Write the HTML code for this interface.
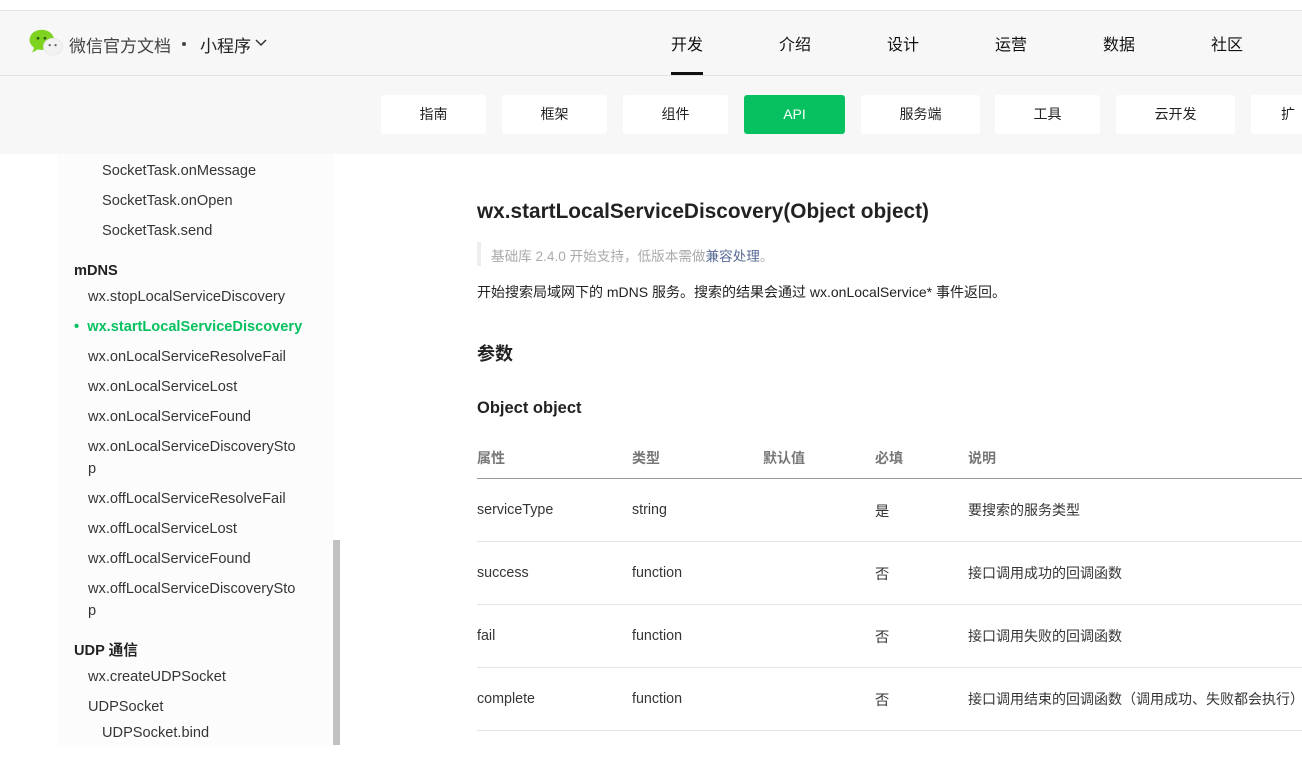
<!DOCTYPE html>
<html><head><meta charset="utf-8"><style>
*{margin:0;padding:0;box-sizing:border-box}
body{width:1302px;height:757px;overflow:hidden;background:#fff;font-family:"Liberation Sans","Noto Sans CJK SC",sans-serif;color:#333;position:relative}
.a{position:absolute;white-space:nowrap}
.hdr{position:absolute;left:0;top:10px;width:1302px;height:66px;background:#f7f7f7;border-top:1px solid #e5e5e5;border-bottom:1px solid #e5e5e5}
.sub{position:absolute;left:0;top:76px;width:1302px;height:78px;background:#f7f7f7}
.btn{position:absolute;top:95px;height:39px;background:#fff;border-radius:3px;font-size:14px;line-height:39px;text-align:center;color:#222}
.nav{position:absolute;top:31px;font-size:16px;color:#111}
.sb{font-size:14.6px;line-height:20px;color:#353535}
.th{font-size:14px;color:#777;font-weight:bold;top:448px}
.td{font-size:14.3px;color:#353535}
.ln{position:absolute;left:477px;width:825px;height:1px;background:#e5e5e5}
</style></head><body>
<div class="hdr"></div>
<svg class="a" style="left:29px;top:29px" width="34" height="28" viewBox="0 0 32 26">
<ellipse cx="12" cy="10" rx="11.5" ry="9.5" fill="#7ed321"/><path d="M5 17 L3 22 L10 18z" fill="#7ed321"/>
<circle cx="8.5" cy="8.5" r="1.3" fill="#2a5a10"/><circle cx="15" cy="8.5" r="1.3" fill="#2a5a10"/>
<ellipse cx="22.5" cy="16.5" rx="9" ry="8" fill="#f2f2f2" stroke="#ddd" stroke-width=".5"/>
<circle cx="19.5" cy="15" r="1.1" fill="#666"/><circle cx="25" cy="15" r="1.1" fill="#666"/></svg>
<div class="a" style="left:69px;top:32px;font-size:17px;color:#444">微信官方文档</div>
<div class="a" style="left:182px;top:42px;width:4px;height:4px;border-radius:2px;background:#444"></div>
<div class="a" style="left:200px;top:32px;font-size:17px;color:#222">小程序</div>
<svg class="a" style="left:255px;top:39px" width="12" height="8"><path d="M1 1 L6 6 L11 1" fill="none" stroke="#333" stroke-width="1.5"/></svg>
<div class="nav a" style="left:671px">开发</div>
<div class="a" style="left:671px;top:72px;width:32px;height:3px;background:#111"></div>
<div class="nav a" style="left:779px">介绍</div>
<div class="nav a" style="left:887px">设计</div>
<div class="nav a" style="left:995px">运营</div>
<div class="nav a" style="left:1103px">数据</div>
<div class="nav a" style="left:1211px">社区</div>
<div class="sub"></div>
<div class="btn" style="left:381px;width:105px">指南</div>
<div class="btn" style="left:502px;width:105px">框架</div>
<div class="btn" style="left:623px;width:105px">组件</div>
<div class="btn" style="left:744px;width:101px;background:#07c160;color:#fff">API</div>
<div class="btn" style="left:861px;width:119px">服务端</div>
<div class="btn" style="left:995px;width:105px">工具</div>
<div class="btn" style="left:1116px;width:119px">云开发</div>
<div class="btn" style="left:1251px;width:80px;text-align:left;padding-left:30px">扩</div>
<div class="a" style="left:57px;top:154px;width:276px;height:591px;background:#fcfcfc"></div>
<div class="a" style="left:333px;top:540px;width:7px;height:205px;background:#c1c1c1"></div>
<div class="a sb" style="left:102px;top:161px">SocketTask.onMessage</div>
<div class="a sb" style="left:102px;top:191px">SocketTask.onOpen</div>
<div class="a sb" style="left:102px;top:221px">SocketTask.send</div>
<div class="a sb" style="left:74px;top:261px;font-weight:bold;color:#222">mDNS</div>
<div class="a sb" style="left:88px;top:287px">wx.stopLocalServiceDiscovery</div>
<div class="a sb" style="left:74px;top:317px;font-weight:bold;color:#07c160">•&nbsp;&nbsp;wx.startLocalServiceDiscovery</div>
<div class="a sb" style="left:88px;top:347px">wx.onLocalServiceResolveFail</div>
<div class="a sb" style="left:88px;top:377px">wx.onLocalServiceLost</div>
<div class="a sb" style="left:88px;top:407px">wx.onLocalServiceFound</div>
<div class="a sb" style="left:88px;top:437px">wx.onLocalServiceDiscoverySto</div>
<div class="a sb" style="left:88px;top:459px">p</div>
<div class="a sb" style="left:88px;top:489px">wx.offLocalServiceResolveFail</div>
<div class="a sb" style="left:88px;top:519px">wx.offLocalServiceLost</div>
<div class="a sb" style="left:88px;top:549px">wx.offLocalServiceFound</div>
<div class="a sb" style="left:88px;top:579px">wx.offLocalServiceDiscoverySto</div>
<div class="a sb" style="left:88px;top:601px">p</div>
<div class="a sb" style="left:74px;top:641px;font-weight:bold;color:#222">UDP 通信</div>
<div class="a sb" style="left:88px;top:667px">wx.createUDPSocket</div>
<div class="a sb" style="left:88px;top:697px">UDPSocket</div>
<div class="a sb" style="left:102px;top:723px">UDPSocket.bind</div>
<div class="a" style="left:477px;top:200px;font-size:20.8px;font-weight:bold;color:#222">wx.startLocalServiceDiscovery(Object object)</div>
<div class="a" style="left:477px;top:242px;width:4px;height:24px;background:#eee"></div>
<div class="a" style="left:491px;top:245px;font-size:13.6px;color:#aaa">基础库 2.4.0 开始支持，低版本需做<span style="color:#576b95">兼容处理</span>。</div>
<div class="a" style="left:477px;top:282px;font-size:14px;color:#222">开始搜索局域网下的 mDNS 服务。搜索的结果会通过 wx.onLocalService* 事件返回。</div>
<div class="a" style="left:477px;top:340px;font-size:18px;font-weight:bold;color:#222">参数</div>
<div class="a" style="left:477px;top:399px;font-size:16.5px;font-weight:bold;color:#222">Object object</div>
<div class="a th" style="left:477px">属性</div>
<div class="a th" style="left:632px">类型</div>
<div class="a th" style="left:763px">默认值</div>
<div class="a th" style="left:875px">必填</div>
<div class="a th" style="left:968px">说明</div>
<div class="ln" style="top:478px;background:#999"></div>
<div class="a td" style="left:477px;top:502px">serviceType</div><div class="a td" style="left:632px;top:502px">string</div><div class="a td" style="left:875px;top:500px">是</div><div class="a td" style="left:968px;top:500px;font-size:14px">要搜索的服务类型</div>
<div class="ln" style="top:541px"></div>
<div class="a td" style="left:477px;top:565px">success</div><div class="a td" style="left:632px;top:565px">function</div><div class="a td" style="left:875px;top:563px">否</div><div class="a td" style="left:968px;top:563px;font-size:14px">接口调用成功的回调函数</div>
<div class="ln" style="top:604px"></div>
<div class="a td" style="left:477px;top:628px">fail</div><div class="a td" style="left:632px;top:628px">function</div><div class="a td" style="left:875px;top:626px">否</div><div class="a td" style="left:968px;top:626px;font-size:14px">接口调用失败的回调函数</div>
<div class="ln" style="top:667px"></div>
<div class="a td" style="left:477px;top:691px">complete</div><div class="a td" style="left:632px;top:691px">function</div><div class="a td" style="left:875px;top:689px">否</div><div class="a td" style="left:968px;top:689px;font-size:14px">接口调用结束的回调函数（调用成功、失败都会执行）</div>
<div class="ln" style="top:730px"></div>
</body></html>
